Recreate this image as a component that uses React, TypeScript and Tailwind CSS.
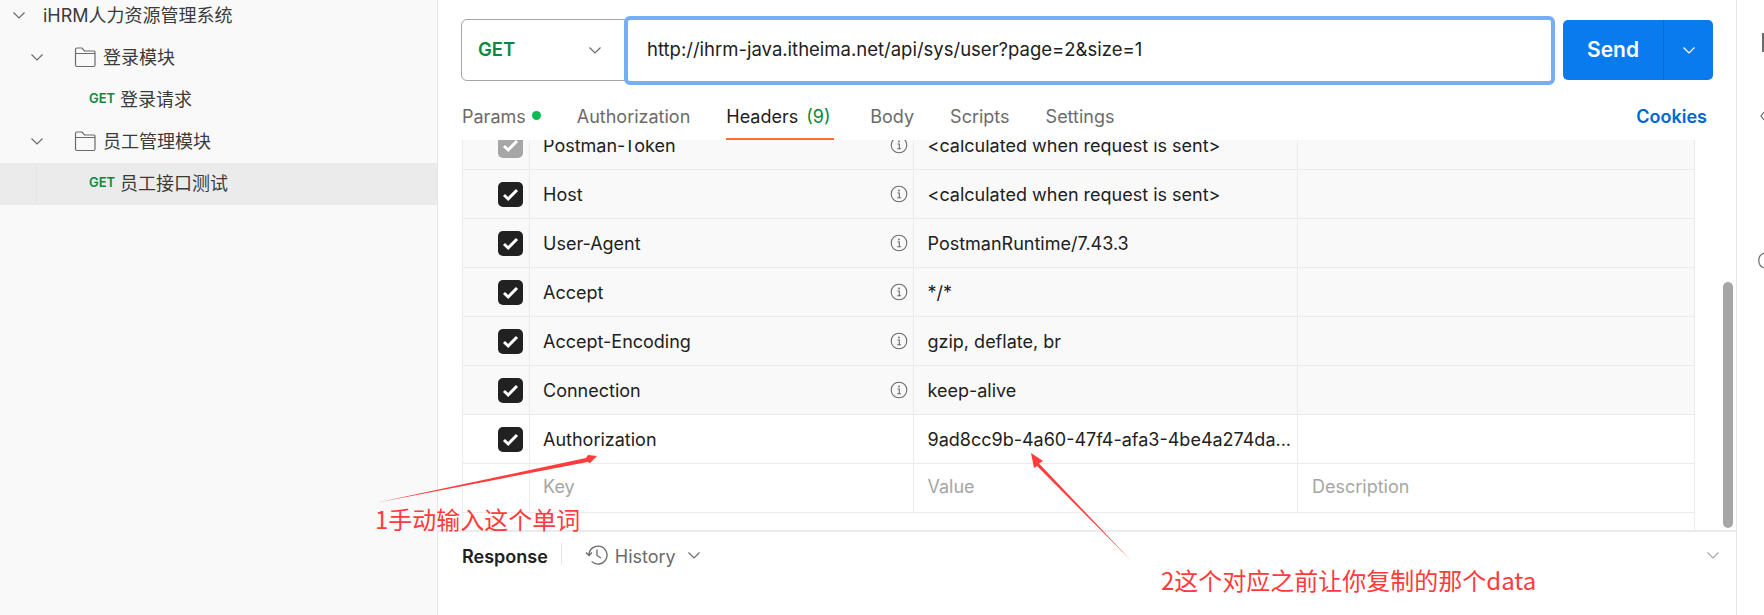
import React from "react";

const FONT = "font-['Inter','Noto_Sans_CJK_SC',sans-serif]";

function Chevron({ className, color = "#6b6b6b", size = 16 }: { className?: string; color?: string; size?: number }) {
  return (
    <svg width={size} height={size} viewBox="0 0 16 16" fill="none" className={className}>
      <path d="M2.500 5.500 8 11l5.500-5.500" stroke={color} strokeWidth="1.200" />
    </svg>
  );
}

function Folder() {
  return (
    <svg width="22" height="22" viewBox="0 0 22 22" fill="none" className="shrink-0">
      <path d="M1.500 19V3.500a1.500 1.500 0 0 1 1.500-1.500h5l2.500 3h9.500a1 1 0 0 1 1 1V19a1.500 1.500 0 0 1-1.500 1.500H3A1.500 1.500 0 0 1 1.500 19ZM1.500 7.500h19" stroke="#6b6b6b" strokeWidth="1.200" />
    </svg>
  );
}

function TreeRow({ children, active, guide }: { children: React.ReactNode; active?: boolean; guide?: boolean }) {
  return (
    <div className={`relative flex h-[42px] items-center pb-[2px] ${active ? "bg-[#ebebeb]" : ""}`}>
      {guide && <div className="absolute left-[36px] top-0 h-full w-px bg-[#e3e3e3]" />}
      {children}
    </div>
  );
}

function Get() {
  return <span className="ml-[89px] mr-[4px] w-[27px] text-[13px] font-semibold text-[#078a3d]">GET</span>;
}

function Sidebar() {
  return (
    <aside className="h-full w-[438px] shrink-0 overflow-hidden border-r border-[#e6e6e6] bg-[#f9f9f9] text-[18px] text-[#3b3b3b]">
      <div className="-mt-[5px]">
        <TreeRow>
          <Chevron className="ml-[11px] mr-[16px]" />
          <span>iHRM人力资源管理系统</span>
        </TreeRow>
        <TreeRow>
          <Chevron className="ml-[29px] mr-[29px]" />
          <Folder />
          <span className="ml-[7px]">登录模块</span>
        </TreeRow>
        <TreeRow>
          <Get />
          <span>登录请求</span>
        </TreeRow>
        <TreeRow>
          <Chevron className="ml-[29px] mr-[29px]" />
          <Folder />
          <span className="ml-[7px]">员工管理模块</span>
        </TreeRow>
        <TreeRow active guide>
          <Get />
          <span>员工接口测试</span>
        </TreeRow>
      </div>
    </aside>
  );
}

function Info() {
  return (
    <svg width="18" height="18" viewBox="0 0 18 18" fill="none">
      <circle cx="9" cy="9" r="7.800" stroke="#6b6b6b" strokeWidth="1.100" />
      <path d="M7.500 8h1.800v4.500M7.200 12.700h3.800" stroke="#6b6b6b" strokeWidth="1.100" />
      <circle cx="9" cy="5.500" r="0.900" fill="#6b6b6b" />
    </svg>
  );
}

function Check({ gray }: { gray?: boolean }) {
  return (
    <div className={`flex size-[25px] items-center justify-center rounded-[5px] ${gray ? "bg-[#a6a6a6]" : "bg-[#212121]"}`}>
      <svg width="19" height="19" viewBox="0 0 19 19" fill="none">
        <path d="M3 10 7.200 14 16 5" stroke="white" strokeWidth="3" />
      </svg>
    </div>
  );
}

const rows = [
  { k: "Postman-Token", v: "<calculated when request is sent>", gray: true, first: true },
  { k: "Host", v: "<calculated when request is sent>" },
  { k: "User-Agent", v: "PostmanRuntime/7.43.3" },
  { k: "Accept", v: "*/*" },
  { k: "Accept-Encoding", v: "gzip, deflate, br" },
  { k: "Connection", v: "keep-alive" },
];

function Row({ k, v, gray, first }: { k: string; v: string; gray?: boolean; first?: boolean }) {
  return (
    <div className={`flex shrink-0 border-b border-[#ebebeb] bg-[#f9f9f9] ${first ? "h-[30px] items-end overflow-hidden" : "h-[49px]"}`}>
      <div className="flex h-[48px] w-[67px] shrink-0 items-center justify-center border-r border-[#ebebeb] pl-[28px]">
        <Check gray={gray} />
      </div>
      <div className="flex h-[48px] w-[384px] shrink-0 items-center justify-between border-r border-[#ebebeb] pl-[13px] pr-[5px]">
        <span>{k}</span>
        <Info />
      </div>
      <div className="flex h-[48px] w-[384px] shrink-0 items-center border-r border-[#ebebeb] pl-[13.500px]">{v}</div>
      <div className="flex-1" />
    </div>
  );
}

export default function App() {
  return (
    <div className={`relative flex h-[615px] w-[1764px] overflow-hidden bg-white text-[18px] text-[#212121] ${FONT}`}>
      <Sidebar />
      <main className="flex h-full w-[1299px] shrink-0 flex-col border-r border-[#e6e6e6]">
        <div className="flex h-[100px] shrink-0 items-center pl-[23px] pr-[23px]">
          <div className="flex h-[62px] w-[166px] shrink-0 items-center justify-between rounded-l-[6px] border border-[#a6a6a6] pl-[16px] pr-[23px]">
            <span className="text-[18.500px] font-semibold text-[#078a3d]">GET</span>
            <Chevron />
          </div>
          <div className="z-10 -ml-[3px] flex h-[69px] w-[931px] shrink-0 items-center rounded-[6px] border-[4px] border-[#74aef5] bg-white pl-[19px] text-[18.500px]">
            http://ihrm-java.itheima.net/api/sys/user?page=2&amp;size=1
          </div>
          <div className="ml-[8px] flex h-[60px] w-[150px] shrink-0 rounded-[5px] bg-[#097bed] text-white">
            <div className="flex w-[101px] items-center justify-center border-r border-[#0a6bcc] text-[21px] font-semibold">Send</div>
            <div className="flex flex-1 items-center justify-center">
              <Chevron color="#ffffff" />
            </div>
          </div>
        </div>
        <div className="flex h-[40px] shrink-0 items-start pl-[24px] pr-[29px] pt-[3px] text-[#6b6b6b]">
          <span>Params</span>
          <span className="ml-[6px] mt-[8px] size-[9px] rounded-full bg-[#0cbb52]" />
          <span className="ml-[36px]">Authorization</span>
          <div className="relative ml-[36px] flex w-[108px] text-[#212121]">
            Headers<span className="ml-[8px] text-[#078a3d]">(9)</span>
            <div className="absolute left-0 right-0 top-[35px] h-[2px] bg-[#ff6c37]" />
          </div>
          <span className="ml-[36px]">Body</span>
          <span className="ml-[36px]">Scripts</span>
          <span className="ml-[36px]">Settings</span>
          <span className="ml-auto font-semibold text-[#0265d2]">Cookies</span>
        </div>
        <div className="relative flex min-h-0 flex-1 flex-col pl-[24px] pr-[41px]">
          <div className="flex h-[390px] flex-col border-l border-r border-[#ebebeb]">
            {rows.map((r) => (
              <Row key={r.k} {...r} />
            ))}
            <div className="flex h-[49px] shrink-0 border-b border-[#ebebeb]">
              <div className="flex w-[67px] shrink-0 items-center justify-center border-r border-[#ebebeb] pl-[28px]">
                <Check />
              </div>
              <div className="flex w-[384px] shrink-0 items-center border-r border-[#ebebeb] pl-[13px]">Authorization</div>
              <div className="flex w-[384px] shrink-0 items-center border-r border-[#ebebeb] pl-[13.500px]">
                <span className="whitespace-nowrap">9ad8cc9b-4a60-47f4-afa3-4be4a274da...</span>
              </div>
            </div>
            <div className="flex h-[49px] shrink-0 border-b border-[#ebebeb] text-[#a6a6a6]">
              <div className="w-[67px] shrink-0 border-r border-[#ebebeb]" />
              <div className="flex w-[384px] shrink-0 items-center border-r border-[#ebebeb] pb-[4px] pl-[13px]">Key</div>
              <div className="flex w-[384px] shrink-0 items-center border-r border-[#ebebeb] pb-[4px] pl-[13.500px]">Value</div>
              <div className="flex flex-1 items-center pb-[4px] pl-[14px]">Description</div>
            </div>
          </div>
          <div className="absolute right-[3px] top-[142px] h-[246px] w-[10px] rounded-full bg-[#a6a6a6]" />
        </div>
        <div className="flex h-[85px] shrink-0 items-start border-t-2 border-[#ebebeb] pl-[24px] pr-[15px] pt-[11px]">
          <span className="font-semibold">Response</span>
          <span className="ml-[13px] h-[22px] w-px bg-[#e6e6e6]" />
          <svg width="24" height="24" viewBox="0 0 24 24" fill="none" className="ml-[23px]">
            <path d="M4 12a9 9 0 1 1 2.600 6.400M1 9.500 4 12.500 7 9.500M12 6.500V12.500L16 15" stroke="#6b6b6b" strokeWidth="1.300" />
          </svg>
          <span className="ml-[6px] text-[#6b6b6b]">History</span>
          <Chevron className="ml-[10px] mt-[4px]" />
          <Chevron className="ml-auto mt-[4px]" color="#a6a6a6" />
        </div>
      </main>
      <div className="flex-1" />
      <svg className="pointer-events-none absolute left-0 top-0" width="1764" height="615" viewBox="0 0 1764 615" fill="none">
        <path d="M375 503 L586 458 L588 455 L597 456 L590 463 L587.500 462 Z" fill="#ff3b3b" />
        <path d="M1132.500 562 L1039 463.500 L1043 461 L1031 453 L1034 468 L1037 466 Z" fill="#ff3b3b" />
        <rect x="1762" y="33" width="2" height="19" fill="#6b6b6b" />
        <path d="M1764 112 L1761 116 L1764 120" stroke="#6b6b6b" strokeWidth="1.200" />
        <path d="M1764 253 A8 8 0 0 0 1764 268" stroke="#6b6b6b" strokeWidth="1.200" />
      </svg>
      <div className="pointer-events-none absolute left-[375px] top-[504px] text-[24px] leading-[30px] text-[#ff3b3b] font-['Noto_Sans_CJK_SC',sans-serif]">1手动输入这个单词</div>
      <div className="pointer-events-none absolute left-[1161px] top-[565px] text-[24px] leading-[30px] text-[#ff3b3b] font-['Noto_Sans_CJK_SC',sans-serif]">2这个对应之前让你复制的那个data</div>
    </div>
  );
}
